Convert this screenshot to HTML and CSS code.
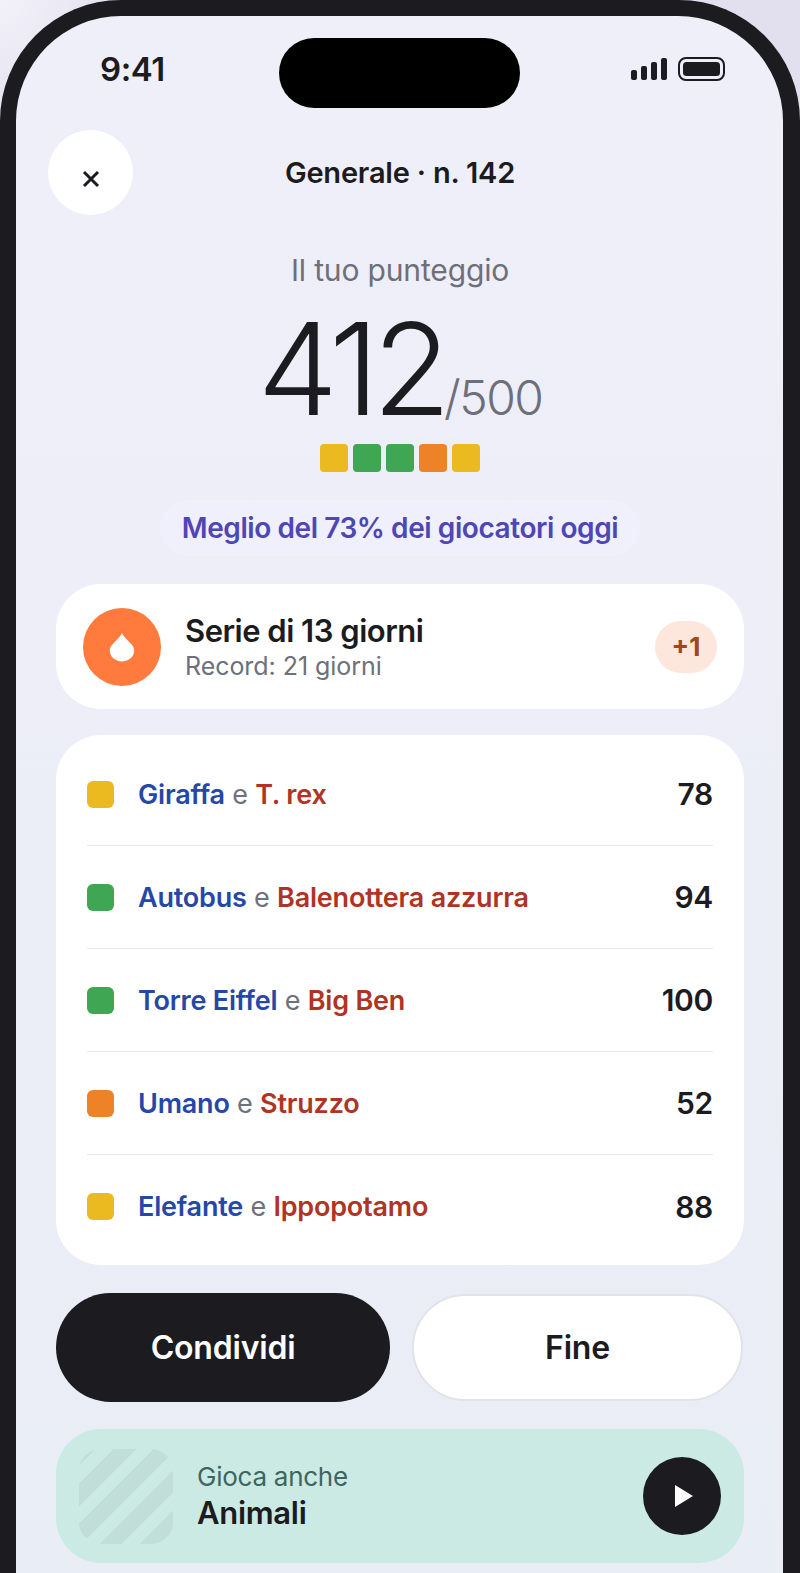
FILE: index.html
```html
<!DOCTYPE html>
<html lang="it">
<head>
<meta charset="utf-8">
<title>Generale n. 142</title>
<link rel="stylesheet" href="styles.css">
</head>
<body>
<div class="phone">
  <main class="screen">
    <div class="status">
      <span class="time">9:41</span>
      <div class="island"></div>
      <div class="status-icons">
        <svg class="signal" width="36" height="22" viewBox="0 0 36 22"><rect x="0" y="12" width="6" height="10" rx="2"/><rect x="10" y="8" width="6" height="14" rx="2"/><rect x="20" y="4" width="6" height="18" rx="2"/><rect x="30" y="0" width="6" height="22" rx="2"/></svg>
        <svg class="battery" width="47" height="24" viewBox="0 0 47 24"><rect x="1" y="1" width="45" height="22" rx="7" fill="none" stroke="#1b1b20" stroke-width="2"/><rect x="5" y="5" width="37" height="14" rx="3.5" fill="#1b1b20"/></svg>
      </div>
    </div>

    <header class="nav">
      <button class="close" aria-label="Chiudi">
        <svg width="18" height="18" viewBox="0 0 18 18"><path d="M2 2 16 16M16 2 2 16" stroke="#1b1b20" stroke-width="3" fill="none"/></svg>
      </button>
      <h1 class="title">Generale · n. 142</h1>
    </header>

    <section class="score">
      <p class="score-label">Il tuo punteggio</p>
      <p class="score-value"><span class="big">412</span><span class="total">/500</span></p>
      <div class="squares">
        <i class="sq yellow"></i><i class="sq green"></i><i class="sq green"></i><i class="sq orange"></i><i class="sq yellow"></i>
      </div>
      <p class="pill">Meglio del 73% dei giocatori oggi</p>
    </section>

    <section class="card streak">
      <div class="flame">
        <svg width="26" height="30" viewBox="0 0 28 32"><path d="M14 1C15.5 4.5 19 7.6 22.500 11.300C25.800 14.500 27.200 17 27.200 19.500C27.200 26.500 21.200 31.500 14 31.500C6.800 31.500 .8 26.500 .8 19.500C.8 17 2.200 14.500 5.500 11.300C9 7.600 12.500 4.500 14 1Z" fill="#fff"/></svg>
      </div>
      <div class="streak-text">
        <div class="streak-title">Serie di 13 giorni</div>
        <div class="streak-sub">Record: 21 giorni</div>
      </div>
      <span class="badge">+1</span>
    </section>

    <section class="card results">
      <div class="row"><i class="sq small yellow"></i><span class="pair"><b class="blue">Giraffa</b> <em>e</em> <b class="red">T. rex</b></span><span class="pts">78</span></div>
      <div class="row"><i class="sq small green"></i><span class="pair"><b class="blue">Autobus</b> <em>e</em> <b class="red">Balenottera azzurra</b></span><span class="pts">94</span></div>
      <div class="row"><i class="sq small green"></i><span class="pair"><b class="blue">Torre Eiffel</b> <em>e</em> <b class="red">Big Ben</b></span><span class="pts">100</span></div>
      <div class="row"><i class="sq small orange"></i><span class="pair"><b class="blue">Umano</b> <em>e</em> <b class="red">Struzzo</b></span><span class="pts">52</span></div>
      <div class="row"><i class="sq small yellow"></i><span class="pair"><b class="blue">Elefante</b> <em>e</em> <b class="red">Ippopotamo</b></span><span class="pts">88</span></div>
    </section>

    <div class="actions">
      <button class="btn dark">Condividi</button>
      <button class="btn light">Fine</button>
    </div>

    <section class="promo">
      <div class="thumb"></div>
      <div class="promo-text">
        <div class="promo-sub">Gioca anche</div>
        <div class="promo-title">Animali</div>
      </div>
      <button class="play" aria-label="Gioca">
        <svg width="18" height="22" viewBox="0 0 18 22"><path d="M0 0 18 11 0 22Z" fill="#fff"/></svg>
      </button>
    </section>
  </main>
</div>
</body>
</html>
```
FILE: styles.css
```css
* { box-sizing: border-box; }
html, body { margin: 0; padding: 0; }
body {
  width: 800px;
  height: 1573px;
  overflow: hidden;
  background: radial-gradient(circle at 0 0, #f3f2fa 0, #e2e0ee 130px);
  font-family: "Inter", "Liberation Sans", sans-serif;
  color: #1b1b20;
}
button { font-family: inherit; border: 0; padding: 0; }
p, h1 { margin: 0; }
i, em { font-style: normal; }

.phone {
  width: 800px;
  height: 1573px;
  background: #1b1b20;
  border-radius: 121px 121px 0 0;
  padding: 16px 17px 0 16px;
}
.screen {
  height: 1557px;
  border-radius: 105px 105px 0 0;
  background: linear-gradient(180deg, #efeff9 0%, #e9edf6 100%);
  padding: 22px 39px 0 40px;
  overflow: hidden;
}

.status {
  display: flex;
  align-items: center;
  height: 70px;
}
.time { font-size: 33px; font-weight: 600; line-height: 1; width: 66px; margin: -7px 0 0 44px; letter-spacing: -.4px; flex: none; }
.island { width: 241px; height: 70px; border-radius: 35px; background: #000; margin-left: 113px; flex: none; }
.status-icons { display: flex; align-items: center; gap: 11px; margin: -8px 19px 0 auto; }
.signal { fill: #1b1b20; }

.nav {
  position: relative;
  display: flex;
  justify-content: center;
  align-items: center;
  height: 85px;
  margin-top: 22px;
}
.close {
  position: absolute;
  left: -8px;
  top: 0;
  width: 85px;
  height: 85px;
  border-radius: 50%;
  background: #fff;
  display: flex;
  align-items: center;
  justify-content: center;
  padding-top: 13px;
}
.title { font-size: 29px; font-weight: 600; letter-spacing: -.2px; line-height: 36px; }

.score { display: flex; flex-direction: column; align-items: center; }
.score-label { margin-top: 37px; font-size: 30px; line-height: 36px; color: #6d6f79; font-weight: 400; letter-spacing: -.15px; }
.score-value { display: flex; align-items: baseline; height: 128px; line-height: 128px; margin-top: 17px; white-space: nowrap; }
.big { font-size: 128px; font-weight: 300; letter-spacing: -7px; }
.total { font-size: 48px; font-weight: 300; color: #6e6f7a; letter-spacing: -1.5px; }
.squares { display: flex; gap: 5px; margin-top: 11px; }
.sq { display: block; width: 28px; height: 28px; border-radius: 4px; }
.sq.small { width: 27px; height: 27px; border-radius: 6px; flex: none; }
.yellow { background: #ebb920; }
.green { background: #3fa653; }
.orange { background: #ee8227; }
.pill {
  margin-top: 28px;
  padding: 9px 22px;
  border-radius: 28px;
  background: #f0effc;
  color: #4f46b5;
  font-size: 28px;
  font-weight: 600;
  line-height: 38px;
  letter-spacing: -.43px;
}

.card { background: #fff; border-radius: 45px; }
.streak {
  display: flex;
  align-items: center;
  height: 125px;
  margin-top: 28px;
  padding: 0 27px 0 27px;
}
.flame { width: 78px; height: 78px; border-radius: 50%; background: #ff7a3d; display: flex; align-items: center; justify-content: center; flex: none; }
.streak-text { flex: 1; margin-left: 24px; }
.streak-title { font-size: 31px; font-weight: 600; line-height: 38px; letter-spacing: -.5px; }
.streak-sub { font-size: 25px; line-height: 32px; color: #6e707a; letter-spacing: -.05px; }
.badge {
  width: 62px; height: 52px; border-radius: 26px;
  background: #fde6dc; color: #9c4a1a;
  font-size: 26px; font-weight: 700;
  display: flex; align-items: center; justify-content: center;
}

.results { margin-top: 26px; padding: 8px 31px; height: 530px; }
.row {
  display: flex;
  align-items: center;
  height: 103px;
  border-bottom: 1px solid #e8e9ed;
}
.row:last-child { border-bottom: 0; }
.pair { flex: 1; margin-left: 24px; font-size: 27px; letter-spacing: -.2px; white-space: nowrap; }
.pair b { font-weight: 600; }
.pair em { color: #6e707a; font-weight: 400; }
.blue { color: #2647a8; }
.red { color: #b03424; }
.pts { font-size: 30px; font-weight: 600; letter-spacing: -.3px; }

.actions { display: flex; align-items: center; gap: 22px; margin-top: 28px; }
.btn { border-radius: 55px; font-size: 32px; font-weight: 600; letter-spacing: -.2px; }
.btn.dark { width: 334px; height: 109px; background: #1b1b20; color: #fff; }
.btn.light { width: 331px; height: 107px; background: #fff; color: #1b1b20; border: 2px solid #e2e3e8; }

.promo {
  display: flex;
  align-items: center;
  height: 134px;
  margin-top: 27px;
  padding: 0 23px;
  border-radius: 45px;
  background: #cbeae3;
}
.thumb {
  width: 94px;
  height: 95px;
  border-radius: 22px;
  flex: none;
  background: repeating-linear-gradient(135deg, #c1ded8 0 12px, #cbeae3 12px 24.5px, #c1ded8 24.5px 28.5px);
}
.promo-text { flex: 1; margin-left: 24px; }
.promo-sub { font-size: 26px; line-height: 34px; color: #3f6560; letter-spacing: -.25px; }
.promo-title { font-size: 31px; line-height: 38px; font-weight: 600; letter-spacing: -.3px; }
.play { width: 78px; height: 78px; border-radius: 50%; background: #1b1b20; display: flex; align-items: center; justify-content: center; padding-left: 4px; }
```
